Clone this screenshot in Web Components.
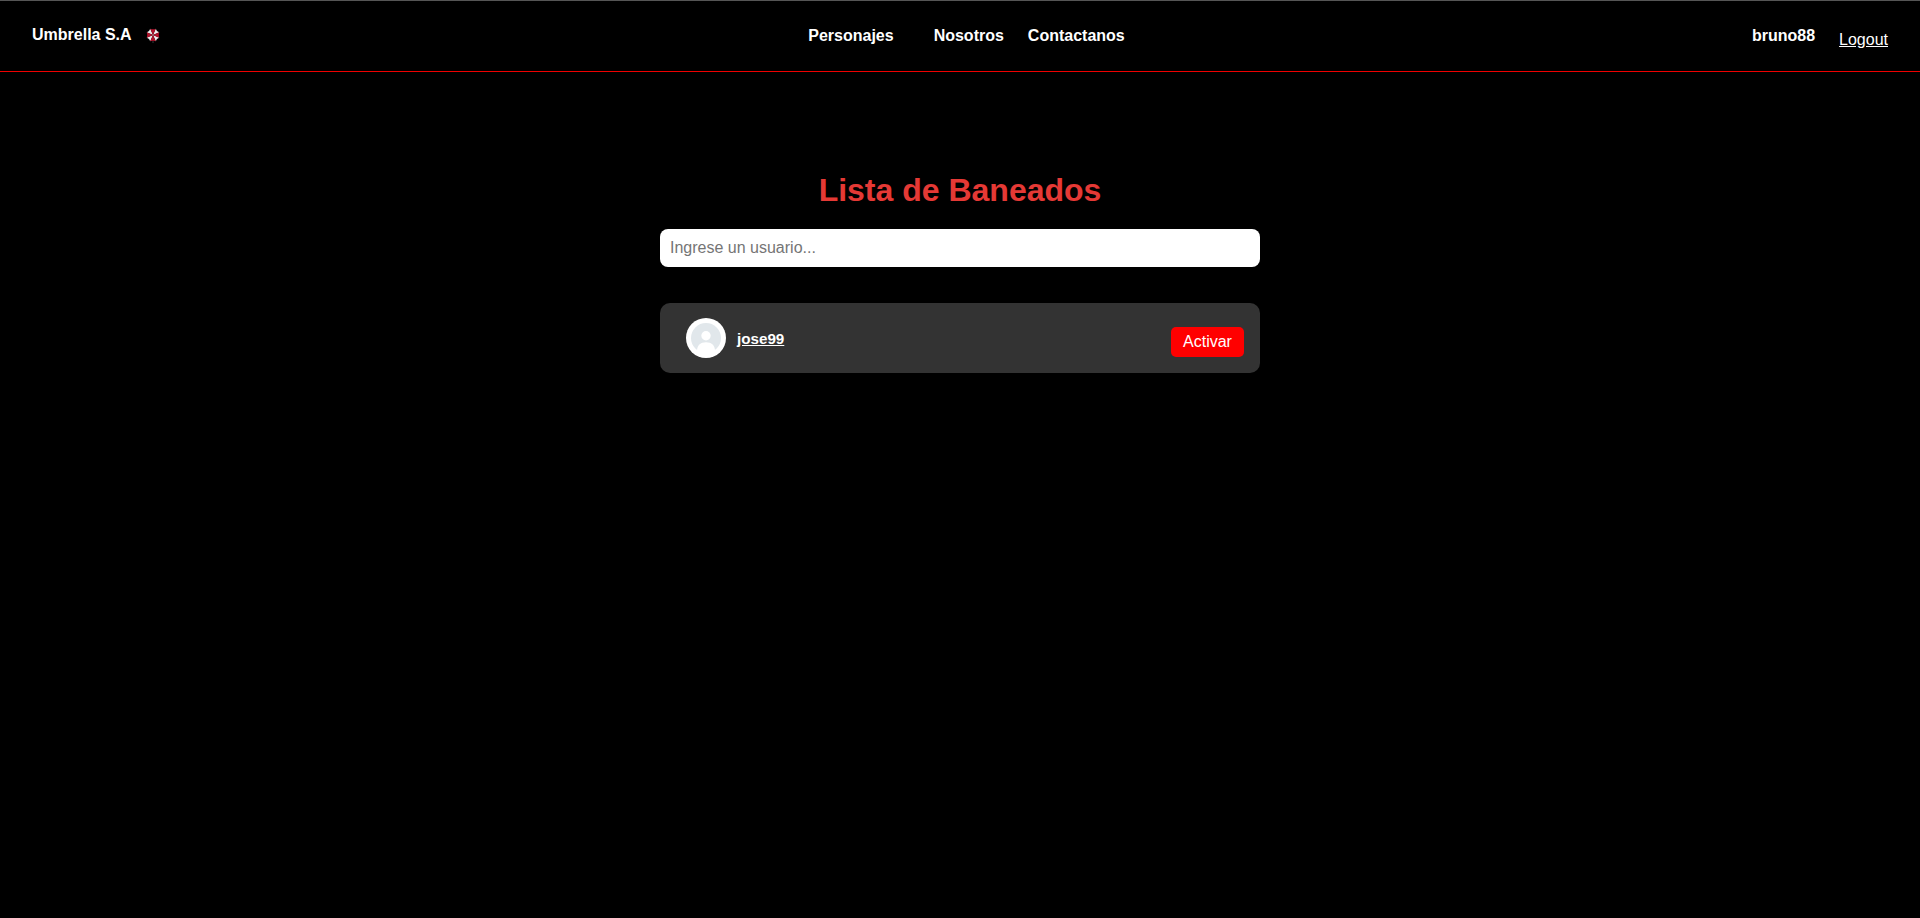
<!DOCTYPE html>
<html lang="es">
<head>
<meta charset="utf-8">
<title>Umbrella S.A</title>
<style>
html,body{margin:0;background:#000;height:100%;overflow:hidden}
body{font:16px/18px "Liberation Sans",Arial,sans-serif;color:#fff}
</style>
</head>
<body>
<site-header user="bruno88"></site-header>
<ban-list heading="Lista de Baneados">
  <search-field placeholder="Ingrese un usuario..."></search-field>
  <banned-user><span>jose99</span></banned-user>
</ban-list>
<script>
const define = (name, html, setup) => customElements.define(name, class extends HTMLElement {
  connectedCallback() {
    if (this.shadowRoot) return;
    this.attachShadow({mode: 'open'}).innerHTML = html;
    if (setup) setup(this, this.shadowRoot);
  }
});

define('umbrella-logo', `
<style>:host{display:block;width:14px;height:15px}svg{display:block}</style>
<svg width="14" height="15" viewBox="0 0 14 15">
  <g fill="#eee">
    <path d="M7 7L4.2 .8Q3.6 3.6 .8 4.2Z"/>
    <path d="M7 7L9.8 .8Q10.4 3.6 13.2 4.2Z"/>
    <path d="M7 7L9.8 13.2Q10.4 10.4 13.2 9.8Z"/>
    <path d="M7 7L4.2 13.2Q3.6 10.4 .8 9.8Z"/>
  </g>
  <g fill="#b3122b">
    <path d="M7 7L4.3.7Q7 1.9 9.7.7Z"/>
    <path d="M7 7L13.3 4.3Q12.1 7 13.3 9.7Z"/>
    <path d="M7 7L9.7 13.3Q7 12.1 4.3 13.3Z"/>
    <path d="M7 7L.7 9.7Q1.9 7 .7 4.3Z"/>
  </g>
  <path d="M6.5 14h1" stroke="#777"/>
</svg>`);

define('site-header', `
<style>
:host{display:grid;grid-template-columns:1fr auto 1fr;box-sizing:border-box;height:72px;padding:25px 32px 0;border-top:1px solid #555;border-bottom:1px solid #f00000;background:#000;font-weight:bold}
.brand{display:flex;align-items:flex-start;gap:14px}
umbrella-logo{margin-top:2px}
nav{display:flex;gap:24px;padding-top:1px;margin-left:13px}
nav a:first-child{margin-right:16px}
.account{display:flex;justify-content:flex-end;gap:24px;padding-top:1px}
.logout{font-weight:normal;text-decoration:underline;margin-top:4px}
</style>
<div class="brand"><span>Umbrella S.A</span><umbrella-logo></umbrella-logo></div>
<nav><a>Personajes</a><a>Nosotros</a><a>Contactanos</a></nav>
<div class="account"><span id="user"></span><a class="logout">Logout</a></div>`,
(el, root) => root.getElementById('user').textContent = el.getAttribute('user'));

define('ban-list', `
<style>
:host{display:flex;flex-direction:column;width:600px;margin:100px auto 0}
h1{margin:0 0 20px;font-size:32px;line-height:37px;text-align:center;color:#e53935}
</style>
<h1></h1><slot></slot>`,
(el, root) => root.querySelector('h1').textContent = el.getAttribute('heading'));

define('search-field', `
<style>
:host{display:block}
input{display:block;box-sizing:border-box;width:100%;height:38px;padding:10px;border:0;border-radius:8px;background:#fff;font:inherit;outline:0}
input::placeholder{color:#757575}
</style>
<input type="text">`,
(el, root) => root.querySelector('input').placeholder = el.getAttribute('placeholder'));

define('banned-user', `
<style>
:host{display:flex;align-items:center;box-sizing:border-box;height:70px;margin-top:36px;padding:0 16px 0 26px;border-radius:10px;background:#333}
svg{display:block}
.name{flex:1;margin:2px 0 0 11px;font-size:15.2px;font-weight:bold;text-decoration:underline}
button{box-sizing:border-box;width:73px;height:30px;margin-top:8px;padding:0;border:0;border-radius:5px;background:#f00;color:#fff;font:inherit}
</style>
<svg width="40" height="40" viewBox="0 0 40 40">
  <circle cx="20" cy="20" r="20" fill="#fff"/>
  <circle cx="20" cy="20" r="15" fill="#e1e7eb"/>
  <circle cx="20" cy="17.7" r="4.7" fill="#fff"/>
  <path d="M11 33C11 27.5 14.5 24.2 20 24.2S29 27.5 29 33L26 37H14Z" fill="#fff"/>
</svg>
<a class="name"><slot></slot></a><button>Activar</button>`);
</script>
</body>
</html>
